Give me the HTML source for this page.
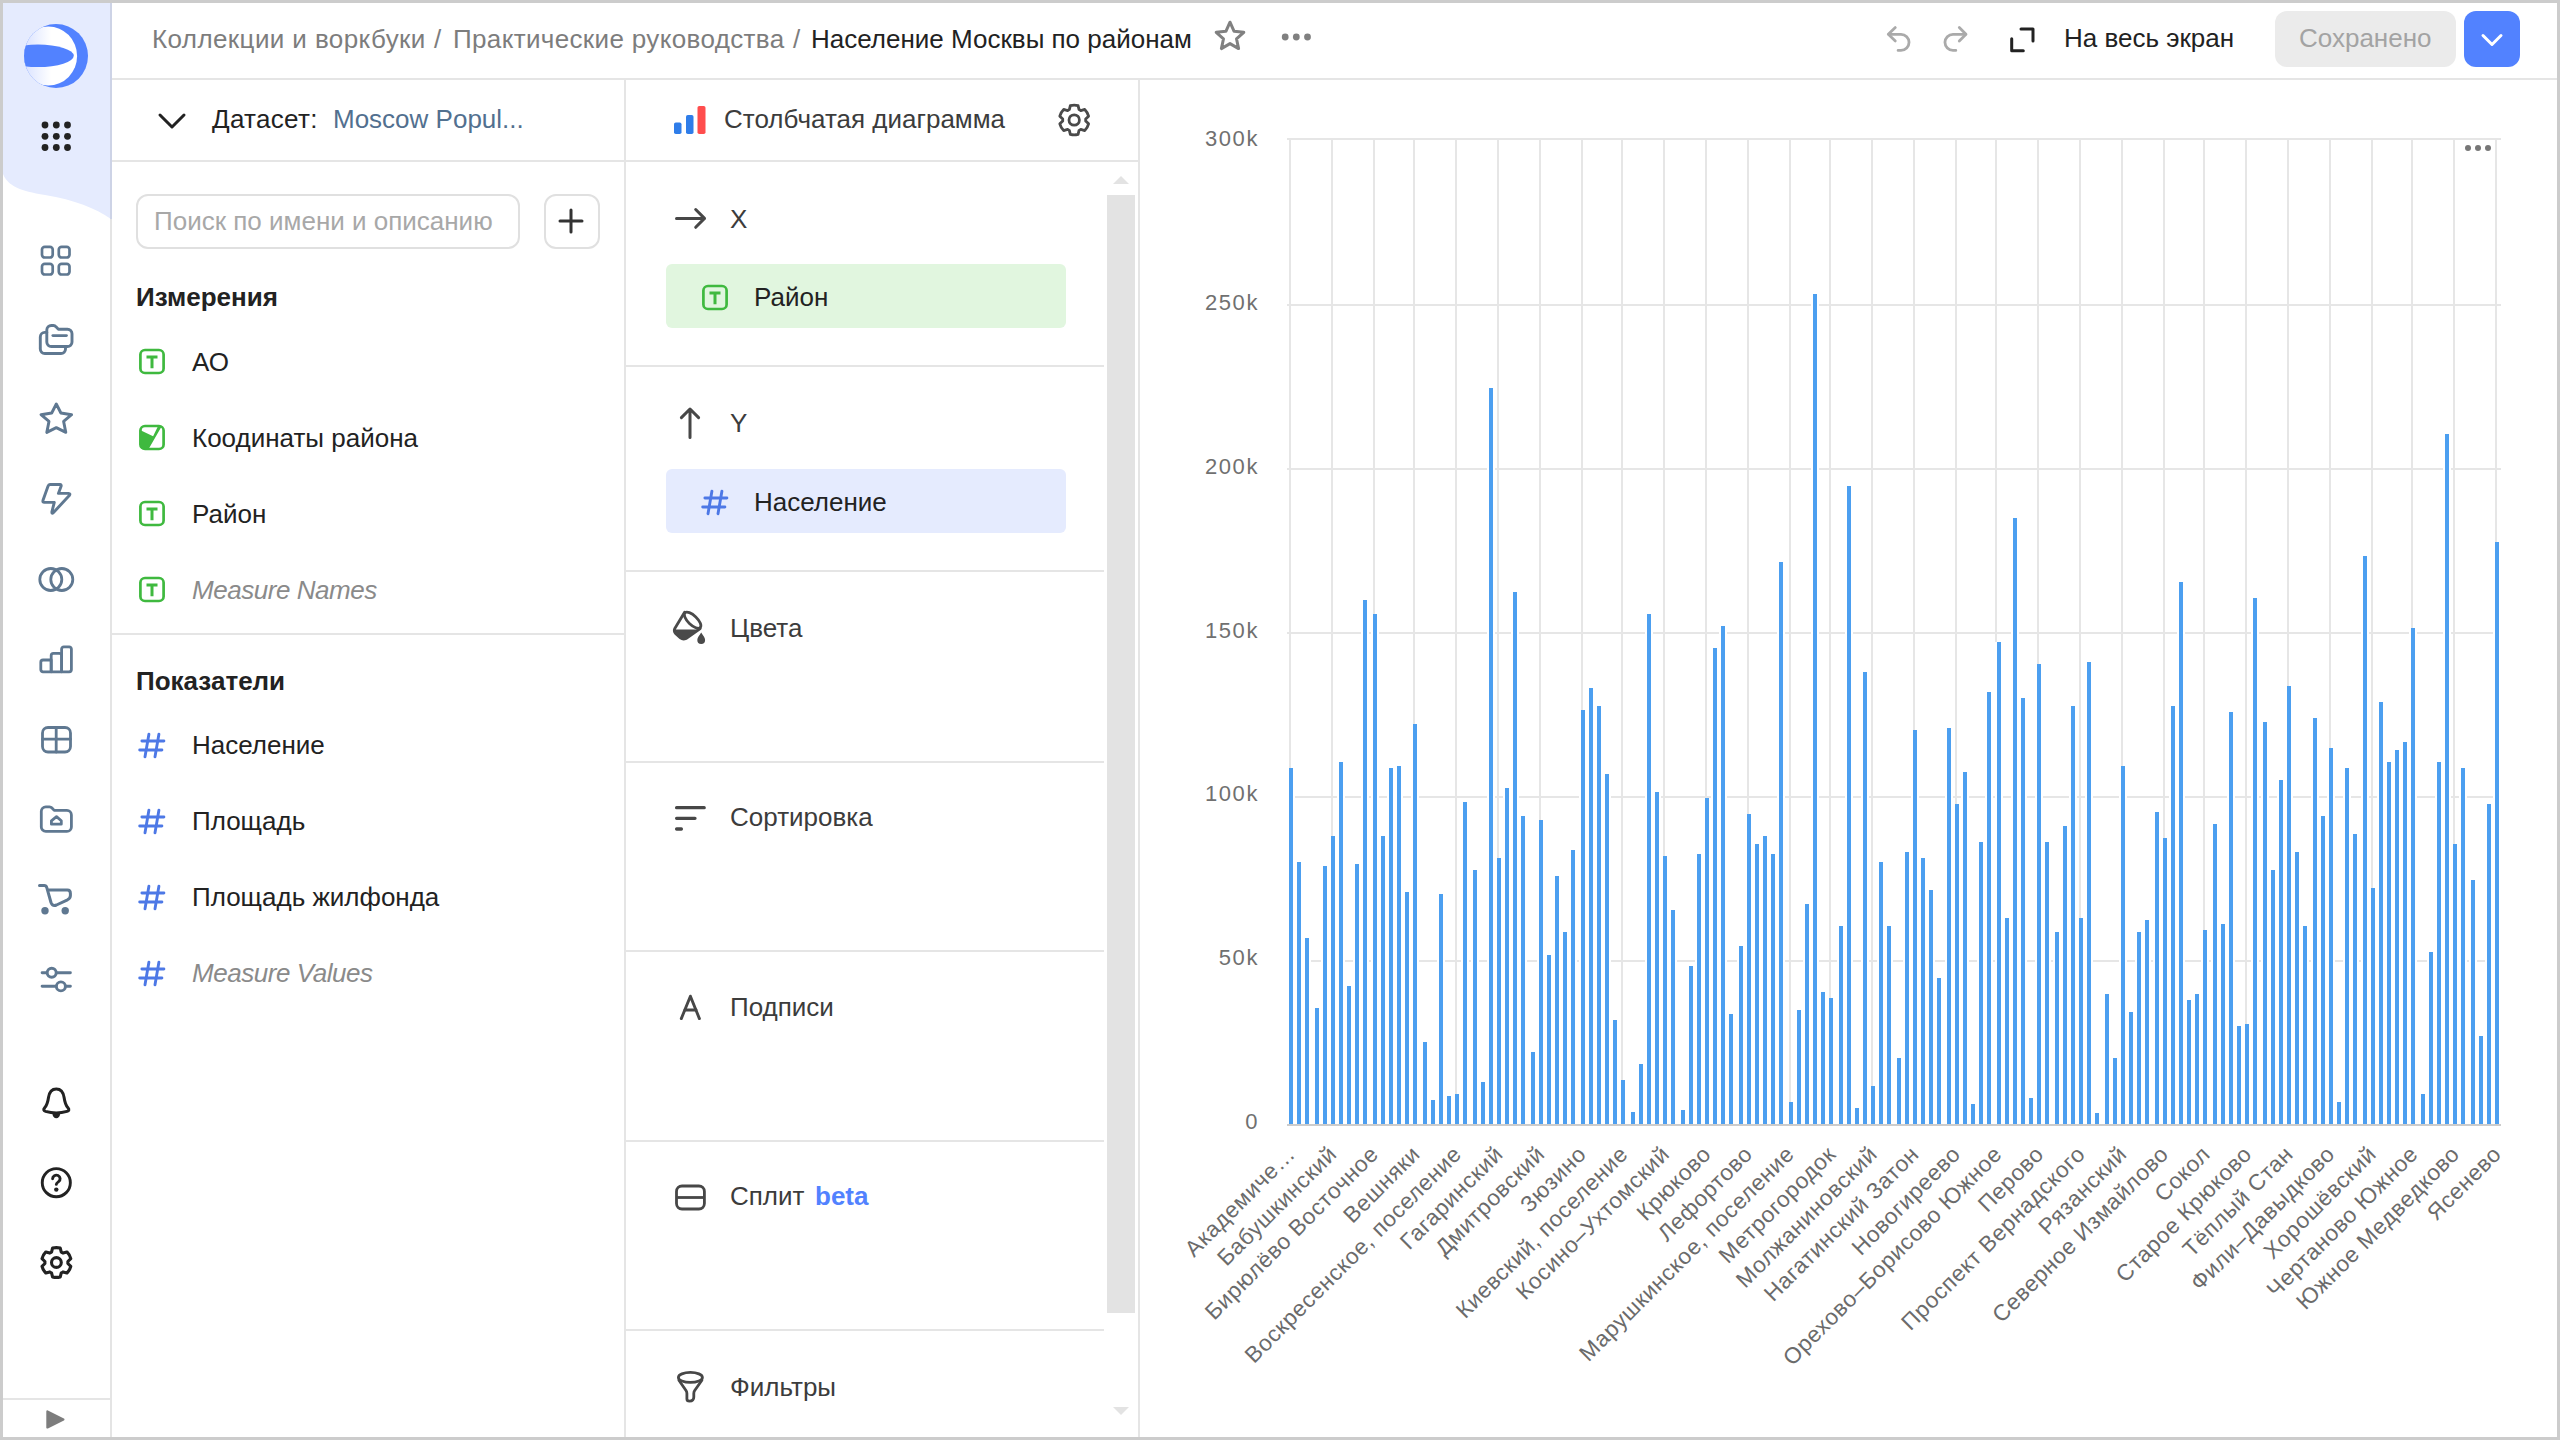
<!DOCTYPE html>
<html><head><meta charset="utf-8"><title>Население Москвы по районам</title>
<style>
html,body{margin:0;padding:0;width:2560px;height:1440px;overflow:hidden;background:#fff}
body{position:relative;font-family:"Liberation Sans", sans-serif}
.r{position:absolute;display:block}
.t{position:absolute;white-space:nowrap;line-height:1;font-family:"Liberation Sans", sans-serif}
</style></head><body>
<div class="r" style="left:0;top:0;width:2560px;height:1440px;background:#fff"></div><svg class="r" style="left:0px;top:0px;" width="112" height="240" viewBox="0 0 112 240"><path d="M3 3 H111 V219 C95 208 75 200 45 195 C20 191 8 186 3 174 Z" fill="#e5ebfe"/></svg><div class="r" style="left:110px;top:3px;width:2px;height:1434px;background:#e4e4e4;"></div><div class="r" style="left:110px;top:3px;width:2px;height:216px;background:#cdd3e6;"></div><svg class="r" style="left:20px;top:20px;" width="72" height="72" viewBox="0 0 72 72">
<defs><linearGradient id="lg" x1="0" y1="0.5" x2="1" y2="0.5"><stop offset="0" stop-color="#d3ddff"/><stop offset="0.55" stop-color="#ffffff"/><stop offset="1" stop-color="#ffffff"/></linearGradient>
<clipPath id="lc"><circle cx="36" cy="36" r="32"/></clipPath></defs>
<circle cx="36" cy="36" r="32" fill="#5282ff"/>
<g clip-path="url(#lc)"><ellipse cx="28.3" cy="36" rx="28.8" ry="29.6" fill="url(#lg)"/>
<ellipse cx="18" cy="35.8" rx="35.8" ry="11.2" fill="#5282ff"/></g>
</svg><svg class="r" style="left:0px;top:0px;" width="112" height="160" viewBox="0 0 112 160"><circle cx="45" cy="125" r="3.4" fill="#222"/><circle cx="45" cy="136.3" r="3.4" fill="#222"/><circle cx="45" cy="147.5" r="3.4" fill="#222"/><circle cx="56.3" cy="125" r="3.4" fill="#222"/><circle cx="56.3" cy="136.3" r="3.4" fill="#222"/><circle cx="56.3" cy="147.5" r="3.4" fill="#222"/><circle cx="67.5" cy="125" r="3.4" fill="#222"/><circle cx="67.5" cy="136.3" r="3.4" fill="#222"/><circle cx="67.5" cy="147.5" r="3.4" fill="#222"/></svg><svg class="r" style="left:34px;top:239px;" width="44" height="44" viewBox="0 0 44 44"><g fill="none" stroke="#5f7891" stroke-width="2.7" stroke-linecap="round" stroke-linejoin="round"><rect x="8" y="7.8" width="10.7" height="10.7" rx="2.8"/><rect x="24.8" y="7.8" width="10.7" height="10.7" rx="2.8"/><rect x="8" y="24.8" width="10.7" height="10.7" rx="2.8"/><rect x="24.8" y="24.8" width="10.7" height="10.7" rx="2.8"/></g></svg><svg class="r" style="left:34px;top:317px;" width="44" height="44" viewBox="0 0 44 44"><g fill="none" stroke="#5f7891" stroke-width="2.9" stroke-linecap="round" stroke-linejoin="round"><path d="M12.8 25 V13 A4.5 4.5 0 0 1 17.3 8.55 H19.5 Q21 8.55 22 9.8 L24.4 12.2 H33.5 A4.5 4.5 0 0 1 38 16.7 V25 A4.5 4.5 0 0 1 33.5 29.5 H17.3 A4.5 4.5 0 0 1 12.8 25 Z"/><path d="M12.8 15.4 H10.8 A4.5 4.5 0 0 0 6.3 19.9 V32 A4.5 4.5 0 0 0 10.8 36.5 H27 A4.5 4.5 0 0 0 31.5 32 V29.5"/><path d="M18.9 18.6 H32.4"/></g></svg><svg class="r" style="left:34px;top:397px;" width="44" height="44" viewBox="0 0 44 44"><g fill="none" stroke="#5f7891" stroke-width="2.9" stroke-linecap="round" stroke-linejoin="round"><path d="M22.3 7 L26.9 16 L37.6 17.7 L29.6 24.4 L31.8 35.4 L22.3 30.6 L12.8 35.4 L15 24.4 L7 17.7 L17.7 16 Z"/></g></svg><svg class="r" style="left:34px;top:476px;" width="44" height="44" viewBox="0 0 44 44"><g fill="none" stroke="#5f7891" stroke-width="2.9" stroke-linecap="round" stroke-linejoin="round"><path d="M15.9 8.55 H26 Q27.6 8.6 27.1 10.2 L24.4 17.4 H34.5 Q36.8 17.6 35.3 19.6 L19.5 36.5 Q17.6 38.4 17.9 35.8 L20.3 26.4 H10.4 Q8.4 26.3 9 24.3 L14 10.2 Q14.6 8.6 15.9 8.55 Z"/></g></svg><svg class="r" style="left:34px;top:557px;" width="44" height="44" viewBox="0 0 44 44"><g fill="none" stroke="#5f7891" stroke-width="2.8" stroke-linecap="round" stroke-linejoin="round"><circle cx="16.8" cy="22.5" r="11"/><circle cx="27.8" cy="22.5" r="11"/></g></svg><svg class="r" style="left:34px;top:637px;" width="44" height="44" viewBox="0 0 44 44"><g fill="none" stroke="#5f7891" stroke-width="2.8" stroke-linecap="round" stroke-linejoin="round"><path d="M17.2 34.8 H9 A2.2 2.2 0 0 1 6.8 32.6 V25.2 A2.2 2.2 0 0 1 9 23 H17.2 Z"/><path d="M17.2 34.8 V18.6 A2.2 2.2 0 0 1 19.4 16.4 H25.4 A2.2 2.2 0 0 1 27.6 18.6 V34.8 Z"/><path d="M27.6 34.8 V12 A2.2 2.2 0 0 1 29.8 9.8 H35.2 A2.2 2.2 0 0 1 37.4 12 V32.6 A2.2 2.2 0 0 1 35.2 34.8 Z"/></g></svg><svg class="r" style="left:34px;top:717px;" width="44" height="44" viewBox="0 0 44 44"><g fill="none" stroke="#5f7891" stroke-width="2.8" stroke-linecap="round" stroke-linejoin="round"><rect x="8.5" y="10.5" width="28" height="24.5" rx="5.5"/><path d="M22.2 10.5 V35 M8.5 22.2 H36.5"/></g></svg><svg class="r" style="left:34px;top:797px;" width="44" height="44" viewBox="0 0 44 44"><g fill="none" stroke="#5f7891" stroke-width="2.8" stroke-linecap="round" stroke-linejoin="round"><path d="M7.3 29.9 V14.3 A4.5 4.5 0 0 1 11.8 9.8 H15.5 Q17 9.8 18 11 L20.2 13.4 H32.9 A4.5 4.5 0 0 1 37.4 17.9 V29.9 A4.5 4.5 0 0 1 32.9 34.4 H11.8 A4.5 4.5 0 0 1 7.3 29.9 Z"/><path d="M17.4 27.2 V23.8 L22.5 19.6 L27.3 23.8 V27.2 Z"/></g></svg><svg class="r" style="left:34px;top:876px;" width="44" height="44" viewBox="0 0 44 44"><g fill="none" stroke="#5f7891" stroke-width="3" stroke-linecap="round" stroke-linejoin="round"><path d="M5.5 9.6 H10.2 Q12.2 9.6 12.8 11.6 L17 26.5 Q18.5 30.5 22.5 29 L33.5 23.8 Q36.4 22.2 36.4 19.5 V17.4 Q36.4 14.05 33.4 14.05 H14"/><circle cx="11" cy="34.8" r="3.7" fill="#5f7891" stroke="none"/><circle cx="31.2" cy="34.8" r="3.7" fill="#5f7891" stroke="none"/></g></svg><svg class="r" style="left:34px;top:956px;" width="44" height="44" viewBox="0 0 44 44"><g fill="none" stroke="#5f7891" stroke-width="2.9" stroke-linecap="round" stroke-linejoin="round"><path d="M8.1 16.8 H36.4 M8.1 30.3 H36.4"/><circle cx="17.7" cy="16.8" r="4.5" fill="#fff"/><circle cx="26.9" cy="30.4" r="4.5" fill="#fff"/></g></svg><svg class="r" style="left:34px;top:1080px;" width="44" height="44" viewBox="0 0 44 44"><g fill="none" stroke="#222" stroke-width="3" stroke-linecap="round" stroke-linejoin="round"><path d="M22.3 8.9 C17.5 8.9 15.2 12.6 14.5 17.5 C13.8 22.5 13 25 10.8 27.6 C9 29.5 9.6 30.8 11.5 31.4 C18.5 33.4 26 33.4 33 31.4 C35 30.8 35.6 29.5 33.8 27.6 C31.6 25 30.8 22.5 30.1 17.5 C29.4 12.6 27.1 8.9 22.3 8.9 Z"/><path d="M18.3 33.4 L26.3 33.4 Q25.5 38.2 22.3 38.2 Q19.1 38.2 18.3 33.4 Z" fill="#222" stroke="none"/></g></svg><svg class="r" style="left:34px;top:1161px;" width="44" height="44" viewBox="0 0 44 44"><g fill="none" stroke="#222" stroke-width="2.9" stroke-linecap="round" stroke-linejoin="round"><circle cx="22.3" cy="21.7" r="14.05"/><path d="M18.6 17.7 A3.75 3.6 0 1 1 24.6 20.6 C23.1 21.7 22.3 22.2 22.3 23.4"/><circle cx="22.3" cy="28.6" r="2.2" fill="#222" stroke="none"/></g></svg><svg class="r" style="left:30px;top:1236px;" width="52" height="52" viewBox="0 0 52 52"><g fill="none" stroke="#222" stroke-width="3.1" stroke-linejoin="round"><path d="M21.54 16.08 L22.54 12.11 A14.9 14.9 0 0 1 30.26 12.11 L31.26 16.08 A11.5 11.5 0 0 1 33.00 17.08 L36.94 15.96 A14.9 14.9 0 0 1 40.79 22.64 L37.86 25.50 A11.5 11.5 0 0 1 37.86 27.50 L40.79 30.36 A14.9 14.9 0 0 1 36.94 37.04 L33.00 35.92 A11.5 11.5 0 0 1 31.26 36.92 L30.26 40.89 A14.9 14.9 0 0 1 22.54 40.89 L21.54 36.92 A11.5 11.5 0 0 1 19.80 35.92 L15.86 37.04 A14.9 14.9 0 0 1 12.01 30.36 L14.94 27.50 A11.5 11.5 0 0 1 14.94 25.50 L12.01 22.64 A14.9 14.9 0 0 1 15.86 15.96 L19.80 17.08 A11.5 11.5 0 0 1 21.54 16.08 Z"/><circle cx="26.4" cy="26.5" r="4.9"/></g></svg><div class="r" style="left:3px;top:1398px;width:107px;height:2px;background:#e5e5e5;"></div><svg class="r" style="left:44px;top:1408px;" width="24" height="24" viewBox="0 0 24 24"><path d="M3.4 3.4 L19.4 11.4 L3.4 19.4 Z" fill="#7d7d7d" stroke="#7d7d7d" stroke-width="2.2" stroke-linejoin="round"/></svg><div class="r" style="left:112px;top:78px;width:2445px;height:2px;background:#e5e5e5;"></div><div id="bc1" class="t " style="left:152px;top:25.5px;font-size:26px;color:#7d7d7d;font-weight:400;letter-spacing:0.4px;">Коллекции и воркбуки</div><div id="bcs1" class="t " style="left:434px;top:25.5px;font-size:26px;color:#7d7d7d;font-weight:400;">/</div><div id="bc2" class="t " style="left:453px;top:25.5px;font-size:26px;color:#7d7d7d;font-weight:400;letter-spacing:0.35px;">Практические руководства</div><div id="bcs2" class="t " style="left:793px;top:25.5px;font-size:26px;color:#7d7d7d;font-weight:400;">/</div><div id="bc3" class="t " style="left:811px;top:25.5px;font-size:26px;color:#222;font-weight:400;">Население Москвы по районам</div><svg class="r" style="left:1212px;top:18px;" width="36" height="36" viewBox="0 0 36 36"><path d="M18 4.2 L22.1 13.3 L31.8 14.3 L24.5 20.8 L26.6 30.6 L18 25.6 L9.4 30.6 L11.5 20.8 L4.2 14.3 L13.9 13.3 Z" fill="none" stroke="#808080" stroke-width="3" stroke-linejoin="round"/></svg><svg class="r" style="left:1278px;top:30px;" width="36" height="14" viewBox="0 0 36 14"><circle cx="7.2" cy="7" r="3.4" fill="#808080"/><circle cx="18.3" cy="7" r="3.4" fill="#808080"/><circle cx="29.5" cy="7" r="3.4" fill="#808080"/></svg><svg class="r" style="left:1884px;top:24px;" width="32" height="32" viewBox="0 0 32 32"><g fill="none" stroke="#aaa" stroke-width="2.8" stroke-linecap="round" stroke-linejoin="round"><path d="M11.3 3.6 L4.3 10.3 L11.3 16.9"/><path d="M4.8 10.3 H17 A8.05 8.05 0 0 1 17 26.4 H14.1"/></g></svg><svg class="r" style="left:1940px;top:24px;" width="32" height="32" viewBox="0 0 32 32"><g fill="none" stroke="#aaa" stroke-width="2.8" stroke-linecap="round" stroke-linejoin="round"><path d="M19.3 3.6 L26 10.3 L19.3 16.9"/><path d="M25.5 10.3 H13 A8.05 8.05 0 0 0 13 26.4 H15.8"/></g></svg><svg class="r" style="left:2006px;top:24px;" width="32" height="32" viewBox="0 0 32 32"><g fill="none" stroke="#222" stroke-width="3" stroke-linecap="round" stroke-linejoin="round"><path d="M15 5 H27 V17"/><path d="M5.7 14.8 V26.8 H17.3"/></g></svg><div id="fs" class="t " style="left:2064px;top:24.5px;font-size:26px;color:#222;font-weight:400;">На весь экран</div><div class="r" style="left:2275px;top:11px;width:181px;height:56px;background:#ebebeb;border-radius:12px"></div><div id="saved" class="t " style="left:2299px;top:24.5px;font-size:26px;color:#a3a3a3;font-weight:400;">Сохранено</div><div class="r" style="left:2464px;top:11px;width:56px;height:56px;background:#5282ff;border-radius:12px"></div><svg class="r" style="left:2476px;top:24px;" width="32" height="32" viewBox="0 0 32 32"><path d="M7 11.5 L16 20.5 L25 11.5" fill="none" stroke="#fff" stroke-width="3" stroke-linecap="round" stroke-linejoin="round"/></svg><div class="r" style="left:112px;top:160px;width:512px;height:2px;background:#e5e5e5;"></div><div class="r" style="left:624px;top:80px;width:2px;height:1357px;background:#e5e5e5;"></div><svg class="r" style="left:156px;top:104px;" width="32" height="32" viewBox="0 0 32 32"><path d="M4 11 L16 23 L28 11" fill="none" stroke="#222" stroke-width="3" stroke-linecap="round" stroke-linejoin="round"/></svg><div id="ds" class="t " style="left:212px;top:105.5px;font-size:26px;color:#222;font-weight:400;letter-spacing:0.3px;">Датасет:</div><div id="dsn" class="t " style="left:333px;top:105.5px;font-size:26px;color:#52708f;font-weight:400;">Moscow Popul...</div><div class="r" style="left:136px;top:194px;width:384px;height:55px;border:2px solid #e0e0e0;border-radius:12px;box-sizing:border-box"></div><div id="search" class="t " style="left:154px;top:207.5px;font-size:26px;color:#a8a8a8;font-weight:400;">Поиск по имени и описанию</div><div class="r" style="left:544px;top:194px;width:56px;height:55px;border:2px solid #e0e0e0;border-radius:12px;box-sizing:border-box"></div><svg class="r" style="left:556px;top:206px;" width="30" height="30" viewBox="0 0 30 30"><path d="M15 4 V26 M4 15 H26" stroke="#333" stroke-width="3" stroke-linecap="round"/></svg><div id="dim" class="t " style="left:136px;top:283.5px;font-size:26px;color:#222;font-weight:700;">Измерения</div><svg class="r" style="left:136.7px;top:346px;" width="30" height="30" viewBox="0 0 30 30"><rect x="3.4" y="4" width="23.2" height="23" rx="4.6" fill="none" stroke="#3fb93f" stroke-width="2.7"/><path d="M9.5 11 H20.5 M15 11 V22.3" stroke="#3fb93f" stroke-width="3" stroke-linecap="butt"/></svg><div class="t " style="left:192px;top:348.5px;font-size:26px;color:#222;font-weight:400;">АО</div><svg class="r" style="left:136.7px;top:422px;" width="30" height="30" viewBox="0 0 30 30"><rect x="3.4" y="4" width="23.2" height="23" rx="4.6" fill="none" stroke="#3fb93f" stroke-width="2.7"/><path d="M4 8.6 L16.1 14.3 L20.6 5 L24.3 5 L11.9 26.6 L4 26.6 Z" fill="#3fb93f"/></svg><div class="t " style="left:192px;top:424.5px;font-size:26px;color:#222;font-weight:400;">Коодинаты района</div><svg class="r" style="left:136.7px;top:498px;" width="30" height="30" viewBox="0 0 30 30"><rect x="3.4" y="4" width="23.2" height="23" rx="4.6" fill="none" stroke="#3fb93f" stroke-width="2.7"/><path d="M9.5 11 H20.5 M15 11 V22.3" stroke="#3fb93f" stroke-width="3" stroke-linecap="butt"/></svg><div class="t " style="left:192px;top:500.5px;font-size:26px;color:#222;font-weight:400;">Район</div><svg class="r" style="left:136.7px;top:574px;" width="30" height="30" viewBox="0 0 30 30"><rect x="3.4" y="4" width="23.2" height="23" rx="4.6" fill="none" stroke="#3fb93f" stroke-width="2.7"/><path d="M9.5 11 H20.5 M15 11 V22.3" stroke="#3fb93f" stroke-width="3" stroke-linecap="butt"/></svg><div class="t " style="left:192px;top:576.5px;font-size:26px;color:#8a8a8a;font-weight:400;"><i style="letter-spacing:-0.45px">Measure Names</i></div><div class="r" style="left:112px;top:633px;width:512px;height:2px;background:#e5e5e5;"></div><div id="meas" class="t " style="left:136px;top:667.5px;font-size:26px;color:#222;font-weight:700;">Показатели</div><svg class="r" style="left:136px;top:730px;" width="34" height="34" viewBox="0 0 34 34"><g stroke="#4d78e6" stroke-width="2.9" stroke-linecap="round"><path d="M12.9 4.2 L9 26.7 M22.9 4.2 L19 26.7 M5.9 11 H27.9 M3.7 20 H25.9"/></g></svg><div class="t " style="left:192px;top:731.5px;font-size:26px;color:#222;font-weight:400;">Население</div><svg class="r" style="left:136px;top:806px;" width="34" height="34" viewBox="0 0 34 34"><g stroke="#4d78e6" stroke-width="2.9" stroke-linecap="round"><path d="M12.9 4.2 L9 26.7 M22.9 4.2 L19 26.7 M5.9 11 H27.9 M3.7 20 H25.9"/></g></svg><div class="t " style="left:192px;top:807.5px;font-size:26px;color:#222;font-weight:400;">Площадь</div><svg class="r" style="left:136px;top:882px;" width="34" height="34" viewBox="0 0 34 34"><g stroke="#4d78e6" stroke-width="2.9" stroke-linecap="round"><path d="M12.9 4.2 L9 26.7 M22.9 4.2 L19 26.7 M5.9 11 H27.9 M3.7 20 H25.9"/></g></svg><div class="t " style="left:192px;top:883.5px;font-size:26px;color:#222;font-weight:400;">Площадь жилфонда</div><svg class="r" style="left:136px;top:958px;" width="34" height="34" viewBox="0 0 34 34"><g stroke="#4d78e6" stroke-width="2.9" stroke-linecap="round"><path d="M12.9 4.2 L9 26.7 M22.9 4.2 L19 26.7 M5.9 11 H27.9 M3.7 20 H25.9"/></g></svg><div class="t " style="left:192px;top:959.5px;font-size:26px;color:#8a8a8a;font-weight:400;"><i style="letter-spacing:-0.45px">Measure Values</i></div><div class="r" style="left:626px;top:160px;width:512px;height:2px;background:#e5e5e5;"></div><div class="r" style="left:1138px;top:80px;width:2px;height:1357px;background:#e5e5e5;"></div><svg class="r" style="left:670px;top:104px;" width="40" height="32" viewBox="0 0 40 32"><rect x="4" y="18.5" width="7.5" height="11.5" rx="1.8" fill="#2f7de9"/><rect x="16" y="11" width="7.5" height="19" rx="1.8" fill="#2f7de9"/><rect x="27.5" y="2" width="8" height="28" rx="1.8" fill="#ff4d4d"/></svg><div id="ctype" class="t " style="left:724px;top:105.5px;font-size:26px;color:#3c3c3c;font-weight:400;">Столбчатая диаграмма</div><svg class="r" style="left:1048px;top:94px;" width="52" height="52" viewBox="0 0 52 52"><g fill="none" stroke="#4a4a4a" stroke-width="2.8" stroke-linejoin="round"><path d="M21.34 15.58 L22.34 11.61 A14.9 14.9 0 0 1 30.06 11.61 L31.06 15.58 A11.5 11.5 0 0 1 32.80 16.58 L36.74 15.46 A14.9 14.9 0 0 1 40.59 22.14 L37.66 25.00 A11.5 11.5 0 0 1 37.66 27.00 L40.59 29.86 A14.9 14.9 0 0 1 36.74 36.54 L32.80 35.42 A11.5 11.5 0 0 1 31.06 36.42 L30.06 40.39 A14.9 14.9 0 0 1 22.34 40.39 L21.34 36.42 A11.5 11.5 0 0 1 19.60 35.42 L15.66 36.54 A14.9 14.9 0 0 1 11.81 29.86 L14.74 27.00 A11.5 11.5 0 0 1 14.74 25.00 L11.81 22.14 A14.9 14.9 0 0 1 15.66 15.46 L19.60 16.58 A11.5 11.5 0 0 1 21.34 15.58 Z"/><circle cx="26.2" cy="26" r="5.2"/></g></svg><svg class="r" style="left:1108px;top:172px;" width="28" height="16" viewBox="0 0 28 16"><path d="M5 12 L13 4 L21 12 Z" fill="#e3e3e3"/></svg><div class="r" style="left:1107px;top:195px;width:28px;height:1118px;background:#e3e3e3;"></div><svg class="r" style="left:1108px;top:1403px;" width="28" height="16" viewBox="0 0 28 16"><path d="M5 4 L21 4 L13 12 Z" fill="#e3e3e3"/></svg><div class="r" style="left:626px;top:365px;width:478px;height:2px;background:#e5e5e5;"></div><div class="r" style="left:626px;top:570px;width:478px;height:2px;background:#e5e5e5;"></div><div class="r" style="left:626px;top:761px;width:478px;height:2px;background:#e5e5e5;"></div><div class="r" style="left:626px;top:950px;width:478px;height:2px;background:#e5e5e5;"></div><div class="r" style="left:626px;top:1140px;width:478px;height:2px;background:#e5e5e5;"></div><div class="r" style="left:626px;top:1329px;width:478px;height:2px;background:#e5e5e5;"></div><svg class="r" style="left:672px;top:202px;" width="36" height="32" viewBox="0 0 36 32"><path d="M4.5 16.4 H32.5 M23.7 7.5 L32.5 16.4 L23.7 25.3" fill="none" stroke="#474747" stroke-width="3" stroke-linecap="round" stroke-linejoin="round"/></svg><div id="xl" class="t " style="left:730px;top:205.5px;font-size:26px;color:#3c3c3c;font-weight:400;">X</div><div class="r" style="left:666px;top:264px;width:400px;height:64px;background:#e1f6df;border-radius:6px"></div><svg class="r" style="left:699.7px;top:282px;" width="30" height="30" viewBox="0 0 30 30"><rect x="3.4" y="4" width="23.2" height="23" rx="4.6" fill="none" stroke="#3fb93f" stroke-width="2.7"/><path d="M9.5 11 H20.5 M15 11 V22.3" stroke="#3fb93f" stroke-width="3" stroke-linecap="butt"/></svg><div id="x_item" class="t " style="left:754px;top:283.5px;font-size:26px;color:#222;font-weight:400;">Район</div><svg class="r" style="left:672px;top:404px;" width="36" height="38" viewBox="0 0 36 38"><path d="M18 33.5 V5 M9.4 13.6 L18 5 L26.6 13.6" fill="none" stroke="#474747" stroke-width="3" stroke-linecap="round" stroke-linejoin="round"/></svg><div id="yl" class="t " style="left:730px;top:409.5px;font-size:26px;color:#3c3c3c;font-weight:400;">Y</div><div class="r" style="left:666px;top:469px;width:400px;height:64px;background:#e5ebfe;border-radius:6px"></div><svg class="r" style="left:699px;top:487px;" width="34" height="34" viewBox="0 0 34 34"><g stroke="#4d78e6" stroke-width="2.9" stroke-linecap="round"><path d="M12.9 4.2 L9 26.7 M22.9 4.2 L19 26.7 M5.9 11 H27.9 M3.7 20 H25.9"/></g></svg><div id="y_item" class="t " style="left:754px;top:488.5px;font-size:26px;color:#222;font-weight:400;">Население</div><svg class="r" style="left:664px;top:600px;" width="50" height="50" viewBox="0 0 50 50"><g stroke="#4a4a4a" stroke-width="2.8" stroke-linejoin="round" stroke-linecap="round" fill="none"><ellipse cx="28.6" cy="20.2" rx="10.6" ry="4.6" transform="rotate(44 28.6 20.2)"/><path d="M20.6 12.3 L10.8 28.5 Q9.5 31 11.5 33.5 L16.5 38 Q19 40 22 38.5 L36.2 28.6"/></g><path d="M10.8 29.5 H34 L36.2 28.6 L22 38.5 Q19 40 16.5 38 L11.5 33.5 Q9.5 31 10.8 29.5 Z" fill="#4a4a4a"/><path d="M37.2 32.6 C35.2 35.6 33.3 38 33.3 40 a3.9 3.9 0 0 0 7.8 0 C41.1 38 39.2 35.6 37.2 32.6 Z" fill="#4a4a4a"/></svg><div class="t " style="left:730px;top:614.5px;font-size:26px;color:#3c3c3c;font-weight:400;">Цвета</div><svg class="r" style="left:670px;top:802px;" width="40" height="34" viewBox="0 0 40 34"><g stroke="#474747" stroke-width="3.3" stroke-linecap="round"><path d="M6.6 5.7 H34.2 M6.6 16.3 H25 M6.6 27 H11.4"/></g></svg><div class="t " style="left:730px;top:803.5px;font-size:26px;color:#3c3c3c;font-weight:400;">Сортировка</div><svg class="r" style="left:670px;top:985px;" width="40" height="40" viewBox="0 0 40 40"><g fill="none" stroke="#474747" stroke-width="2.9" stroke-linecap="round" stroke-linejoin="round"><path d="M11.3 33.6 L20.4 11.2 L29.4 33.6"/><path d="M15 25 H26"/></g></svg><div class="t " style="left:730px;top:993.5px;font-size:26px;color:#3c3c3c;font-weight:400;">Подписи</div><svg class="r" style="left:672px;top:1180px;" width="36" height="34" viewBox="0 0 36 34"><g fill="none" stroke="#474747" stroke-width="2.8"><rect x="4.5" y="6" width="27.9" height="23" rx="5.5"/><path d="M4.5 17.5 H32.4"/></g></svg><div class="t " style="left:730px;top:1182.5px;font-size:26px;color:#3c3c3c;font-weight:400;">Сплит</div><div class="t " style="left:815px;top:1182.5px;font-size:26px;color:#5282ff;font-weight:700;">beta</div><svg class="r" style="left:660px;top:1355px;" width="60" height="60" viewBox="0 0 60 60"><g fill="none" stroke="#474747" stroke-width="2.8" stroke-linejoin="round" stroke-linecap="round"><ellipse cx="30.4" cy="22.4" rx="12" ry="5"/><path d="M18.9 25.2 L26 35.5 Q26.9 36.8 26.9 38.5 V44 Q26.9 46.2 29.5 46.2 Q33.8 46 33.8 42 V38.5 Q33.8 36.8 34.7 35.5 L41.9 25.2"/></g></svg><div class="t " style="left:730px;top:1373.5px;font-size:26px;color:#3c3c3c;font-weight:400;">Фильтры</div><svg class="r" style="left:0;top:0" width="2560" height="1440"><rect x="1287" y="138" width="1214" height="2" fill="#e6e6e6"/><rect x="1287" y="304" width="1214" height="2" fill="#e6e6e6"/><rect x="1287" y="468" width="1214" height="2" fill="#e6e6e6"/><rect x="1287" y="632" width="1214" height="2" fill="#e6e6e6"/><rect x="1287" y="796" width="1214" height="2" fill="#e6e6e6"/><rect x="1287" y="960" width="1214" height="2" fill="#e6e6e6"/><rect x="1289" y="139" width="2" height="986" fill="#e6e6e6"/><rect x="1331" y="139" width="2" height="986" fill="#e6e6e6"/><rect x="1373" y="139" width="2" height="986" fill="#e6e6e6"/><rect x="1413" y="139" width="2" height="986" fill="#e6e6e6"/><rect x="1455" y="139" width="2" height="986" fill="#e6e6e6"/><rect x="1497" y="139" width="2" height="986" fill="#e6e6e6"/><rect x="1539" y="139" width="2" height="986" fill="#e6e6e6"/><rect x="1581" y="139" width="2" height="986" fill="#e6e6e6"/><rect x="1621" y="139" width="2" height="986" fill="#e6e6e6"/><rect x="1663" y="139" width="2" height="986" fill="#e6e6e6"/><rect x="1705" y="139" width="2" height="986" fill="#e6e6e6"/><rect x="1747" y="139" width="2" height="986" fill="#e6e6e6"/><rect x="1789" y="139" width="2" height="986" fill="#e6e6e6"/><rect x="1829" y="139" width="2" height="986" fill="#e6e6e6"/><rect x="1871" y="139" width="2" height="986" fill="#e6e6e6"/><rect x="1913" y="139" width="2" height="986" fill="#e6e6e6"/><rect x="1955" y="139" width="2" height="986" fill="#e6e6e6"/><rect x="1995" y="139" width="2" height="986" fill="#e6e6e6"/><rect x="2037" y="139" width="2" height="986" fill="#e6e6e6"/><rect x="2079" y="139" width="2" height="986" fill="#e6e6e6"/><rect x="2121" y="139" width="2" height="986" fill="#e6e6e6"/><rect x="2163" y="139" width="2" height="986" fill="#e6e6e6"/><rect x="2203" y="139" width="2" height="986" fill="#e6e6e6"/><rect x="2245" y="139" width="2" height="986" fill="#e6e6e6"/><rect x="2287" y="139" width="2" height="986" fill="#e6e6e6"/><rect x="2329" y="139" width="2" height="986" fill="#e6e6e6"/><rect x="2371" y="139" width="2" height="986" fill="#e6e6e6"/><rect x="2411" y="139" width="2" height="986" fill="#e6e6e6"/><rect x="2453" y="139" width="2" height="986" fill="#e6e6e6"/><rect x="2495" y="139" width="2" height="986" fill="#e6e6e6"/><rect x="1287" y="768" width="8" height="356" fill="#fff"/><rect x="1295" y="862" width="8" height="262" fill="#fff"/><rect x="1303" y="938" width="8" height="186" fill="#fff"/><rect x="1313" y="1008" width="8" height="116" fill="#fff"/><rect x="1321" y="866" width="8" height="258" fill="#fff"/><rect x="1329" y="836" width="8" height="288" fill="#fff"/><rect x="1337" y="762" width="8" height="362" fill="#fff"/><rect x="1345" y="986" width="8" height="138" fill="#fff"/><rect x="1353" y="864" width="8" height="260" fill="#fff"/><rect x="1361" y="600" width="8" height="524" fill="#fff"/><rect x="1371" y="614" width="8" height="510" fill="#fff"/><rect x="1379" y="836" width="8" height="288" fill="#fff"/><rect x="1387" y="768" width="8" height="356" fill="#fff"/><rect x="1395" y="766" width="8" height="358" fill="#fff"/><rect x="1403" y="892" width="8" height="232" fill="#fff"/><rect x="1411" y="724" width="8" height="400" fill="#fff"/><rect x="1421" y="1042" width="8" height="82" fill="#fff"/><rect x="1429" y="1100" width="8" height="24" fill="#fff"/><rect x="1437" y="894" width="8" height="230" fill="#fff"/><rect x="1445" y="1096" width="8" height="28" fill="#fff"/><rect x="1453" y="1094" width="8" height="30" fill="#fff"/><rect x="1461" y="802" width="8" height="322" fill="#fff"/><rect x="1471" y="870" width="8" height="254" fill="#fff"/><rect x="1479" y="1082" width="8" height="42" fill="#fff"/><rect x="1487" y="388" width="8" height="736" fill="#fff"/><rect x="1495" y="858" width="8" height="266" fill="#fff"/><rect x="1503" y="788" width="8" height="336" fill="#fff"/><rect x="1511" y="592" width="8" height="532" fill="#fff"/><rect x="1519" y="816" width="8" height="308" fill="#fff"/><rect x="1529" y="1052" width="8" height="72" fill="#fff"/><rect x="1537" y="820" width="8" height="304" fill="#fff"/><rect x="1545" y="955" width="8" height="169" fill="#fff"/><rect x="1553" y="876" width="8" height="248" fill="#fff"/><rect x="1561" y="932" width="8" height="192" fill="#fff"/><rect x="1569" y="850" width="8" height="274" fill="#fff"/><rect x="1579" y="710" width="8" height="414" fill="#fff"/><rect x="1587" y="688" width="8" height="436" fill="#fff"/><rect x="1595" y="706" width="8" height="418" fill="#fff"/><rect x="1603" y="774" width="8" height="350" fill="#fff"/><rect x="1611" y="1020" width="8" height="104" fill="#fff"/><rect x="1619" y="1080" width="8" height="44" fill="#fff"/><rect x="1629" y="1112" width="8" height="12" fill="#fff"/><rect x="1637" y="1064" width="8" height="60" fill="#fff"/><rect x="1645" y="614" width="8" height="510" fill="#fff"/><rect x="1653" y="792" width="8" height="332" fill="#fff"/><rect x="1661" y="856" width="8" height="268" fill="#fff"/><rect x="1669" y="910" width="8" height="214" fill="#fff"/><rect x="1679" y="1110" width="8" height="14" fill="#fff"/><rect x="1687" y="966" width="8" height="158" fill="#fff"/><rect x="1695" y="854" width="8" height="270" fill="#fff"/><rect x="1703" y="798" width="8" height="326" fill="#fff"/><rect x="1711" y="648" width="8" height="476" fill="#fff"/><rect x="1719" y="626" width="8" height="498" fill="#fff"/><rect x="1727" y="1014" width="8" height="110" fill="#fff"/><rect x="1737" y="946" width="8" height="178" fill="#fff"/><rect x="1745" y="814" width="8" height="310" fill="#fff"/><rect x="1753" y="844" width="8" height="280" fill="#fff"/><rect x="1761" y="836" width="8" height="288" fill="#fff"/><rect x="1769" y="854" width="8" height="270" fill="#fff"/><rect x="1777" y="562" width="8" height="562" fill="#fff"/><rect x="1787" y="1102" width="8" height="22" fill="#fff"/><rect x="1795" y="1010" width="8" height="114" fill="#fff"/><rect x="1803" y="904" width="8" height="220" fill="#fff"/><rect x="1811" y="294" width="8" height="830" fill="#fff"/><rect x="1819" y="992" width="8" height="132" fill="#fff"/><rect x="1827" y="998" width="8" height="126" fill="#fff"/><rect x="1837" y="926" width="8" height="198" fill="#fff"/><rect x="1845" y="486" width="8" height="638" fill="#fff"/><rect x="1853" y="1108" width="8" height="16" fill="#fff"/><rect x="1861" y="672" width="8" height="452" fill="#fff"/><rect x="1869" y="1086" width="8" height="38" fill="#fff"/><rect x="1877" y="862" width="8" height="262" fill="#fff"/><rect x="1885" y="926" width="8" height="198" fill="#fff"/><rect x="1895" y="1058" width="8" height="66" fill="#fff"/><rect x="1903" y="852" width="8" height="272" fill="#fff"/><rect x="1911" y="730" width="8" height="394" fill="#fff"/><rect x="1919" y="858" width="8" height="266" fill="#fff"/><rect x="1927" y="890" width="8" height="234" fill="#fff"/><rect x="1935" y="978" width="8" height="146" fill="#fff"/><rect x="1945" y="728" width="8" height="396" fill="#fff"/><rect x="1953" y="804" width="8" height="320" fill="#fff"/><rect x="1961" y="772" width="8" height="352" fill="#fff"/><rect x="1969" y="1104" width="8" height="20" fill="#fff"/><rect x="1977" y="842" width="8" height="282" fill="#fff"/><rect x="1985" y="692" width="8" height="432" fill="#fff"/><rect x="1995" y="642" width="8" height="482" fill="#fff"/><rect x="2003" y="918" width="8" height="206" fill="#fff"/><rect x="2011" y="518" width="8" height="606" fill="#fff"/><rect x="2019" y="698" width="8" height="426" fill="#fff"/><rect x="2027" y="1098" width="8" height="26" fill="#fff"/><rect x="2035" y="664" width="8" height="460" fill="#fff"/><rect x="2043" y="842" width="8" height="282" fill="#fff"/><rect x="2053" y="932" width="8" height="192" fill="#fff"/><rect x="2061" y="826" width="8" height="298" fill="#fff"/><rect x="2069" y="706" width="8" height="418" fill="#fff"/><rect x="2077" y="918" width="8" height="206" fill="#fff"/><rect x="2085" y="662" width="8" height="462" fill="#fff"/><rect x="2093" y="1113" width="8" height="11" fill="#fff"/><rect x="2103" y="994" width="8" height="130" fill="#fff"/><rect x="2111" y="1058" width="8" height="66" fill="#fff"/><rect x="2119" y="766" width="8" height="358" fill="#fff"/><rect x="2127" y="1012" width="8" height="112" fill="#fff"/><rect x="2135" y="932" width="8" height="192" fill="#fff"/><rect x="2143" y="920" width="8" height="204" fill="#fff"/><rect x="2153" y="812" width="8" height="312" fill="#fff"/><rect x="2161" y="838" width="8" height="286" fill="#fff"/><rect x="2169" y="706" width="8" height="418" fill="#fff"/><rect x="2177" y="582" width="8" height="542" fill="#fff"/><rect x="2185" y="1000" width="8" height="124" fill="#fff"/><rect x="2193" y="994" width="8" height="130" fill="#fff"/><rect x="2201" y="930" width="8" height="194" fill="#fff"/><rect x="2211" y="824" width="8" height="300" fill="#fff"/><rect x="2219" y="924" width="8" height="200" fill="#fff"/><rect x="2227" y="712" width="8" height="412" fill="#fff"/><rect x="2235" y="1026" width="8" height="98" fill="#fff"/><rect x="2243" y="1024" width="8" height="100" fill="#fff"/><rect x="2251" y="598" width="8" height="526" fill="#fff"/><rect x="2261" y="722" width="8" height="402" fill="#fff"/><rect x="2269" y="870" width="8" height="254" fill="#fff"/><rect x="2277" y="780" width="8" height="344" fill="#fff"/><rect x="2285" y="686" width="8" height="438" fill="#fff"/><rect x="2293" y="852" width="8" height="272" fill="#fff"/><rect x="2301" y="926" width="8" height="198" fill="#fff"/><rect x="2311" y="718" width="8" height="406" fill="#fff"/><rect x="2319" y="816" width="8" height="308" fill="#fff"/><rect x="2327" y="748" width="8" height="376" fill="#fff"/><rect x="2335" y="1102" width="8" height="22" fill="#fff"/><rect x="2343" y="768" width="8" height="356" fill="#fff"/><rect x="2351" y="834" width="8" height="290" fill="#fff"/><rect x="2361" y="556" width="8" height="568" fill="#fff"/><rect x="2369" y="888" width="8" height="236" fill="#fff"/><rect x="2377" y="702" width="8" height="422" fill="#fff"/><rect x="2385" y="762" width="8" height="362" fill="#fff"/><rect x="2393" y="750" width="8" height="374" fill="#fff"/><rect x="2401" y="742" width="8" height="382" fill="#fff"/><rect x="2409" y="628" width="8" height="496" fill="#fff"/><rect x="2419" y="1094" width="8" height="30" fill="#fff"/><rect x="2427" y="952" width="8" height="172" fill="#fff"/><rect x="2435" y="762" width="8" height="362" fill="#fff"/><rect x="2443" y="434" width="8" height="690" fill="#fff"/><rect x="2451" y="844" width="8" height="280" fill="#fff"/><rect x="2459" y="768" width="8" height="356" fill="#fff"/><rect x="2469" y="880" width="8" height="244" fill="#fff"/><rect x="2477" y="1036" width="8" height="88" fill="#fff"/><rect x="2485" y="804" width="8" height="320" fill="#fff"/><rect x="2493" y="542" width="8" height="582" fill="#fff"/><rect x="1289" y="768" width="4" height="356" fill="#4c9ff0"/><rect x="1297" y="862" width="4" height="262" fill="#4c9ff0"/><rect x="1305" y="938" width="4" height="186" fill="#4c9ff0"/><rect x="1315" y="1008" width="4" height="116" fill="#4c9ff0"/><rect x="1323" y="866" width="4" height="258" fill="#4c9ff0"/><rect x="1331" y="836" width="4" height="288" fill="#4c9ff0"/><rect x="1339" y="762" width="4" height="362" fill="#4c9ff0"/><rect x="1347" y="986" width="4" height="138" fill="#4c9ff0"/><rect x="1355" y="864" width="4" height="260" fill="#4c9ff0"/><rect x="1363" y="600" width="4" height="524" fill="#4c9ff0"/><rect x="1373" y="614" width="4" height="510" fill="#4c9ff0"/><rect x="1381" y="836" width="4" height="288" fill="#4c9ff0"/><rect x="1389" y="768" width="4" height="356" fill="#4c9ff0"/><rect x="1397" y="766" width="4" height="358" fill="#4c9ff0"/><rect x="1405" y="892" width="4" height="232" fill="#4c9ff0"/><rect x="1413" y="724" width="4" height="400" fill="#4c9ff0"/><rect x="1423" y="1042" width="4" height="82" fill="#4c9ff0"/><rect x="1431" y="1100" width="4" height="24" fill="#4c9ff0"/><rect x="1439" y="894" width="4" height="230" fill="#4c9ff0"/><rect x="1447" y="1096" width="4" height="28" fill="#4c9ff0"/><rect x="1455" y="1094" width="4" height="30" fill="#4c9ff0"/><rect x="1463" y="802" width="4" height="322" fill="#4c9ff0"/><rect x="1473" y="870" width="4" height="254" fill="#4c9ff0"/><rect x="1481" y="1082" width="4" height="42" fill="#4c9ff0"/><rect x="1489" y="388" width="4" height="736" fill="#4c9ff0"/><rect x="1497" y="858" width="4" height="266" fill="#4c9ff0"/><rect x="1505" y="788" width="4" height="336" fill="#4c9ff0"/><rect x="1513" y="592" width="4" height="532" fill="#4c9ff0"/><rect x="1521" y="816" width="4" height="308" fill="#4c9ff0"/><rect x="1531" y="1052" width="4" height="72" fill="#4c9ff0"/><rect x="1539" y="820" width="4" height="304" fill="#4c9ff0"/><rect x="1547" y="955" width="4" height="169" fill="#4c9ff0"/><rect x="1555" y="876" width="4" height="248" fill="#4c9ff0"/><rect x="1563" y="932" width="4" height="192" fill="#4c9ff0"/><rect x="1571" y="850" width="4" height="274" fill="#4c9ff0"/><rect x="1581" y="710" width="4" height="414" fill="#4c9ff0"/><rect x="1589" y="688" width="4" height="436" fill="#4c9ff0"/><rect x="1597" y="706" width="4" height="418" fill="#4c9ff0"/><rect x="1605" y="774" width="4" height="350" fill="#4c9ff0"/><rect x="1613" y="1020" width="4" height="104" fill="#4c9ff0"/><rect x="1621" y="1080" width="4" height="44" fill="#4c9ff0"/><rect x="1631" y="1112" width="4" height="12" fill="#4c9ff0"/><rect x="1639" y="1064" width="4" height="60" fill="#4c9ff0"/><rect x="1647" y="614" width="4" height="510" fill="#4c9ff0"/><rect x="1655" y="792" width="4" height="332" fill="#4c9ff0"/><rect x="1663" y="856" width="4" height="268" fill="#4c9ff0"/><rect x="1671" y="910" width="4" height="214" fill="#4c9ff0"/><rect x="1681" y="1110" width="4" height="14" fill="#4c9ff0"/><rect x="1689" y="966" width="4" height="158" fill="#4c9ff0"/><rect x="1697" y="854" width="4" height="270" fill="#4c9ff0"/><rect x="1705" y="798" width="4" height="326" fill="#4c9ff0"/><rect x="1713" y="648" width="4" height="476" fill="#4c9ff0"/><rect x="1721" y="626" width="4" height="498" fill="#4c9ff0"/><rect x="1729" y="1014" width="4" height="110" fill="#4c9ff0"/><rect x="1739" y="946" width="4" height="178" fill="#4c9ff0"/><rect x="1747" y="814" width="4" height="310" fill="#4c9ff0"/><rect x="1755" y="844" width="4" height="280" fill="#4c9ff0"/><rect x="1763" y="836" width="4" height="288" fill="#4c9ff0"/><rect x="1771" y="854" width="4" height="270" fill="#4c9ff0"/><rect x="1779" y="562" width="4" height="562" fill="#4c9ff0"/><rect x="1789" y="1102" width="4" height="22" fill="#4c9ff0"/><rect x="1797" y="1010" width="4" height="114" fill="#4c9ff0"/><rect x="1805" y="904" width="4" height="220" fill="#4c9ff0"/><rect x="1813" y="294" width="4" height="830" fill="#4c9ff0"/><rect x="1821" y="992" width="4" height="132" fill="#4c9ff0"/><rect x="1829" y="998" width="4" height="126" fill="#4c9ff0"/><rect x="1839" y="926" width="4" height="198" fill="#4c9ff0"/><rect x="1847" y="486" width="4" height="638" fill="#4c9ff0"/><rect x="1855" y="1108" width="4" height="16" fill="#4c9ff0"/><rect x="1863" y="672" width="4" height="452" fill="#4c9ff0"/><rect x="1871" y="1086" width="4" height="38" fill="#4c9ff0"/><rect x="1879" y="862" width="4" height="262" fill="#4c9ff0"/><rect x="1887" y="926" width="4" height="198" fill="#4c9ff0"/><rect x="1897" y="1058" width="4" height="66" fill="#4c9ff0"/><rect x="1905" y="852" width="4" height="272" fill="#4c9ff0"/><rect x="1913" y="730" width="4" height="394" fill="#4c9ff0"/><rect x="1921" y="858" width="4" height="266" fill="#4c9ff0"/><rect x="1929" y="890" width="4" height="234" fill="#4c9ff0"/><rect x="1937" y="978" width="4" height="146" fill="#4c9ff0"/><rect x="1947" y="728" width="4" height="396" fill="#4c9ff0"/><rect x="1955" y="804" width="4" height="320" fill="#4c9ff0"/><rect x="1963" y="772" width="4" height="352" fill="#4c9ff0"/><rect x="1971" y="1104" width="4" height="20" fill="#4c9ff0"/><rect x="1979" y="842" width="4" height="282" fill="#4c9ff0"/><rect x="1987" y="692" width="4" height="432" fill="#4c9ff0"/><rect x="1997" y="642" width="4" height="482" fill="#4c9ff0"/><rect x="2005" y="918" width="4" height="206" fill="#4c9ff0"/><rect x="2013" y="518" width="4" height="606" fill="#4c9ff0"/><rect x="2021" y="698" width="4" height="426" fill="#4c9ff0"/><rect x="2029" y="1098" width="4" height="26" fill="#4c9ff0"/><rect x="2037" y="664" width="4" height="460" fill="#4c9ff0"/><rect x="2045" y="842" width="4" height="282" fill="#4c9ff0"/><rect x="2055" y="932" width="4" height="192" fill="#4c9ff0"/><rect x="2063" y="826" width="4" height="298" fill="#4c9ff0"/><rect x="2071" y="706" width="4" height="418" fill="#4c9ff0"/><rect x="2079" y="918" width="4" height="206" fill="#4c9ff0"/><rect x="2087" y="662" width="4" height="462" fill="#4c9ff0"/><rect x="2095" y="1113" width="4" height="11" fill="#4c9ff0"/><rect x="2105" y="994" width="4" height="130" fill="#4c9ff0"/><rect x="2113" y="1058" width="4" height="66" fill="#4c9ff0"/><rect x="2121" y="766" width="4" height="358" fill="#4c9ff0"/><rect x="2129" y="1012" width="4" height="112" fill="#4c9ff0"/><rect x="2137" y="932" width="4" height="192" fill="#4c9ff0"/><rect x="2145" y="920" width="4" height="204" fill="#4c9ff0"/><rect x="2155" y="812" width="4" height="312" fill="#4c9ff0"/><rect x="2163" y="838" width="4" height="286" fill="#4c9ff0"/><rect x="2171" y="706" width="4" height="418" fill="#4c9ff0"/><rect x="2179" y="582" width="4" height="542" fill="#4c9ff0"/><rect x="2187" y="1000" width="4" height="124" fill="#4c9ff0"/><rect x="2195" y="994" width="4" height="130" fill="#4c9ff0"/><rect x="2203" y="930" width="4" height="194" fill="#4c9ff0"/><rect x="2213" y="824" width="4" height="300" fill="#4c9ff0"/><rect x="2221" y="924" width="4" height="200" fill="#4c9ff0"/><rect x="2229" y="712" width="4" height="412" fill="#4c9ff0"/><rect x="2237" y="1026" width="4" height="98" fill="#4c9ff0"/><rect x="2245" y="1024" width="4" height="100" fill="#4c9ff0"/><rect x="2253" y="598" width="4" height="526" fill="#4c9ff0"/><rect x="2263" y="722" width="4" height="402" fill="#4c9ff0"/><rect x="2271" y="870" width="4" height="254" fill="#4c9ff0"/><rect x="2279" y="780" width="4" height="344" fill="#4c9ff0"/><rect x="2287" y="686" width="4" height="438" fill="#4c9ff0"/><rect x="2295" y="852" width="4" height="272" fill="#4c9ff0"/><rect x="2303" y="926" width="4" height="198" fill="#4c9ff0"/><rect x="2313" y="718" width="4" height="406" fill="#4c9ff0"/><rect x="2321" y="816" width="4" height="308" fill="#4c9ff0"/><rect x="2329" y="748" width="4" height="376" fill="#4c9ff0"/><rect x="2337" y="1102" width="4" height="22" fill="#4c9ff0"/><rect x="2345" y="768" width="4" height="356" fill="#4c9ff0"/><rect x="2353" y="834" width="4" height="290" fill="#4c9ff0"/><rect x="2363" y="556" width="4" height="568" fill="#4c9ff0"/><rect x="2371" y="888" width="4" height="236" fill="#4c9ff0"/><rect x="2379" y="702" width="4" height="422" fill="#4c9ff0"/><rect x="2387" y="762" width="4" height="362" fill="#4c9ff0"/><rect x="2395" y="750" width="4" height="374" fill="#4c9ff0"/><rect x="2403" y="742" width="4" height="382" fill="#4c9ff0"/><rect x="2411" y="628" width="4" height="496" fill="#4c9ff0"/><rect x="2421" y="1094" width="4" height="30" fill="#4c9ff0"/><rect x="2429" y="952" width="4" height="172" fill="#4c9ff0"/><rect x="2437" y="762" width="4" height="362" fill="#4c9ff0"/><rect x="2445" y="434" width="4" height="690" fill="#4c9ff0"/><rect x="2453" y="844" width="4" height="280" fill="#4c9ff0"/><rect x="2461" y="768" width="4" height="356" fill="#4c9ff0"/><rect x="2471" y="880" width="4" height="244" fill="#4c9ff0"/><rect x="2479" y="1036" width="4" height="88" fill="#4c9ff0"/><rect x="2487" y="804" width="4" height="320" fill="#4c9ff0"/><rect x="2495" y="542" width="4" height="582" fill="#4c9ff0"/><rect x="1287" y="1124" width="1214" height="2" fill="#ccc"/><text x="1259" y="145.8" text-anchor="end" font-size="22" letter-spacing="1.6" fill="#707070" font-family='"Liberation Sans", sans-serif'>300k</text><text x="1259" y="309.7" text-anchor="end" font-size="22" letter-spacing="1.6" fill="#707070" font-family='"Liberation Sans", sans-serif'>250k</text><text x="1259" y="473.6" text-anchor="end" font-size="22" letter-spacing="1.6" fill="#707070" font-family='"Liberation Sans", sans-serif'>200k</text><text x="1259" y="637.5" text-anchor="end" font-size="22" letter-spacing="1.6" fill="#707070" font-family='"Liberation Sans", sans-serif'>150k</text><text x="1259" y="801.4" text-anchor="end" font-size="22" letter-spacing="1.6" fill="#707070" font-family='"Liberation Sans", sans-serif'>100k</text><text x="1259" y="965.3" text-anchor="end" font-size="22" letter-spacing="1.6" fill="#707070" font-family='"Liberation Sans", sans-serif'>50k</text><text x="1259" y="1129.2" text-anchor="end" font-size="22" letter-spacing="1.6" fill="#707070" font-family='"Liberation Sans", sans-serif'>0</text><text x="1296.5" y="1155.5" text-anchor="end" transform="rotate(-45 1296.5 1155.5)" font-size="22.5" letter-spacing="0.65" fill="#6b6b6b" font-family='"Liberation Sans", sans-serif'>Академиче…</text><text x="1338.1" y="1155.5" text-anchor="end" transform="rotate(-45 1338.1 1155.5)" font-size="22.5" letter-spacing="0.65" fill="#6b6b6b" font-family='"Liberation Sans", sans-serif'>Бабушкинский</text><text x="1379.7" y="1155.5" text-anchor="end" transform="rotate(-45 1379.7 1155.5)" font-size="22.5" letter-spacing="0.65" fill="#6b6b6b" font-family='"Liberation Sans", sans-serif'>Бирюлёво Восточное</text><text x="1421.3" y="1155.5" text-anchor="end" transform="rotate(-45 1421.3 1155.5)" font-size="22.5" letter-spacing="0.65" fill="#6b6b6b" font-family='"Liberation Sans", sans-serif'>Вешняки</text><text x="1462.8" y="1155.5" text-anchor="end" transform="rotate(-45 1462.8 1155.5)" font-size="22.5" letter-spacing="0.65" fill="#6b6b6b" font-family='"Liberation Sans", sans-serif'>Воскресенское, поселение</text><text x="1504.4" y="1155.5" text-anchor="end" transform="rotate(-45 1504.4 1155.5)" font-size="22.5" letter-spacing="0.65" fill="#6b6b6b" font-family='"Liberation Sans", sans-serif'>Гагаринский</text><text x="1546.0" y="1155.5" text-anchor="end" transform="rotate(-45 1546.0 1155.5)" font-size="22.5" letter-spacing="0.65" fill="#6b6b6b" font-family='"Liberation Sans", sans-serif'>Дмитровский</text><text x="1587.6" y="1155.5" text-anchor="end" transform="rotate(-45 1587.6 1155.5)" font-size="22.5" letter-spacing="0.65" fill="#6b6b6b" font-family='"Liberation Sans", sans-serif'>Зюзино</text><text x="1629.2" y="1155.5" text-anchor="end" transform="rotate(-45 1629.2 1155.5)" font-size="22.5" letter-spacing="0.65" fill="#6b6b6b" font-family='"Liberation Sans", sans-serif'>Киевский, поселение</text><text x="1670.8" y="1155.5" text-anchor="end" transform="rotate(-45 1670.8 1155.5)" font-size="22.5" letter-spacing="0.65" fill="#6b6b6b" font-family='"Liberation Sans", sans-serif'>Косино–Ухтомский</text><text x="1712.3" y="1155.5" text-anchor="end" transform="rotate(-45 1712.3 1155.5)" font-size="22.5" letter-spacing="0.65" fill="#6b6b6b" font-family='"Liberation Sans", sans-serif'>Крюково</text><text x="1753.9" y="1155.5" text-anchor="end" transform="rotate(-45 1753.9 1155.5)" font-size="22.5" letter-spacing="0.65" fill="#6b6b6b" font-family='"Liberation Sans", sans-serif'>Лефортово</text><text x="1795.5" y="1155.5" text-anchor="end" transform="rotate(-45 1795.5 1155.5)" font-size="22.5" letter-spacing="0.65" fill="#6b6b6b" font-family='"Liberation Sans", sans-serif'>Марушкинское, поселение</text><text x="1837.1" y="1155.5" text-anchor="end" transform="rotate(-45 1837.1 1155.5)" font-size="22.5" letter-spacing="0.65" fill="#6b6b6b" font-family='"Liberation Sans", sans-serif'>Метрогородок</text><text x="1878.7" y="1155.5" text-anchor="end" transform="rotate(-45 1878.7 1155.5)" font-size="22.5" letter-spacing="0.65" fill="#6b6b6b" font-family='"Liberation Sans", sans-serif'>Молжаниновский</text><text x="1920.3" y="1155.5" text-anchor="end" transform="rotate(-45 1920.3 1155.5)" font-size="22.5" letter-spacing="0.65" fill="#6b6b6b" font-family='"Liberation Sans", sans-serif'>Нагатинский Затон</text><text x="1961.9" y="1155.5" text-anchor="end" transform="rotate(-45 1961.9 1155.5)" font-size="22.5" letter-spacing="0.65" fill="#6b6b6b" font-family='"Liberation Sans", sans-serif'>Новогиреево</text><text x="2003.4" y="1155.5" text-anchor="end" transform="rotate(-45 2003.4 1155.5)" font-size="22.5" letter-spacing="0.65" fill="#6b6b6b" font-family='"Liberation Sans", sans-serif'>Орехово–Борисово Южное</text><text x="2045.0" y="1155.5" text-anchor="end" transform="rotate(-45 2045.0 1155.5)" font-size="22.5" letter-spacing="0.65" fill="#6b6b6b" font-family='"Liberation Sans", sans-serif'>Перово</text><text x="2086.6" y="1155.5" text-anchor="end" transform="rotate(-45 2086.6 1155.5)" font-size="22.5" letter-spacing="0.65" fill="#6b6b6b" font-family='"Liberation Sans", sans-serif'>Проспект Вернадского</text><text x="2128.2" y="1155.5" text-anchor="end" transform="rotate(-45 2128.2 1155.5)" font-size="22.5" letter-spacing="0.65" fill="#6b6b6b" font-family='"Liberation Sans", sans-serif'>Рязанский</text><text x="2169.8" y="1155.5" text-anchor="end" transform="rotate(-45 2169.8 1155.5)" font-size="22.5" letter-spacing="0.65" fill="#6b6b6b" font-family='"Liberation Sans", sans-serif'>Северное Измайлово</text><text x="2211.4" y="1155.5" text-anchor="end" transform="rotate(-45 2211.4 1155.5)" font-size="22.5" letter-spacing="0.65" fill="#6b6b6b" font-family='"Liberation Sans", sans-serif'>Сокол</text><text x="2253.0" y="1155.5" text-anchor="end" transform="rotate(-45 2253.0 1155.5)" font-size="22.5" letter-spacing="0.65" fill="#6b6b6b" font-family='"Liberation Sans", sans-serif'>Старое Крюково</text><text x="2294.5" y="1155.5" text-anchor="end" transform="rotate(-45 2294.5 1155.5)" font-size="22.5" letter-spacing="0.65" fill="#6b6b6b" font-family='"Liberation Sans", sans-serif'>Тёплый Стан</text><text x="2336.1" y="1155.5" text-anchor="end" transform="rotate(-45 2336.1 1155.5)" font-size="22.5" letter-spacing="0.65" fill="#6b6b6b" font-family='"Liberation Sans", sans-serif'>Фили–Давыдково</text><text x="2377.7" y="1155.5" text-anchor="end" transform="rotate(-45 2377.7 1155.5)" font-size="22.5" letter-spacing="0.65" fill="#6b6b6b" font-family='"Liberation Sans", sans-serif'>Хорошёвский</text><text x="2419.3" y="1155.5" text-anchor="end" transform="rotate(-45 2419.3 1155.5)" font-size="22.5" letter-spacing="0.65" fill="#6b6b6b" font-family='"Liberation Sans", sans-serif'>Чертаново Южное</text><text x="2460.9" y="1155.5" text-anchor="end" transform="rotate(-45 2460.9 1155.5)" font-size="22.5" letter-spacing="0.65" fill="#6b6b6b" font-family='"Liberation Sans", sans-serif'>Южное Медведково</text><text x="2502.5" y="1155.5" text-anchor="end" transform="rotate(-45 2502.5 1155.5)" font-size="22.5" letter-spacing="0.65" fill="#6b6b6b" font-family='"Liberation Sans", sans-serif'>Ясенево</text><circle cx="2468" cy="148" r="3" fill="#777"/><circle cx="2478" cy="148" r="3" fill="#777"/><circle cx="2488" cy="148" r="3" fill="#777"/></svg><div class="r" style="left:0;top:0;width:2560px;height:1440px;box-sizing:border-box;border:3px solid #cccccc"></div>
</body></html>
